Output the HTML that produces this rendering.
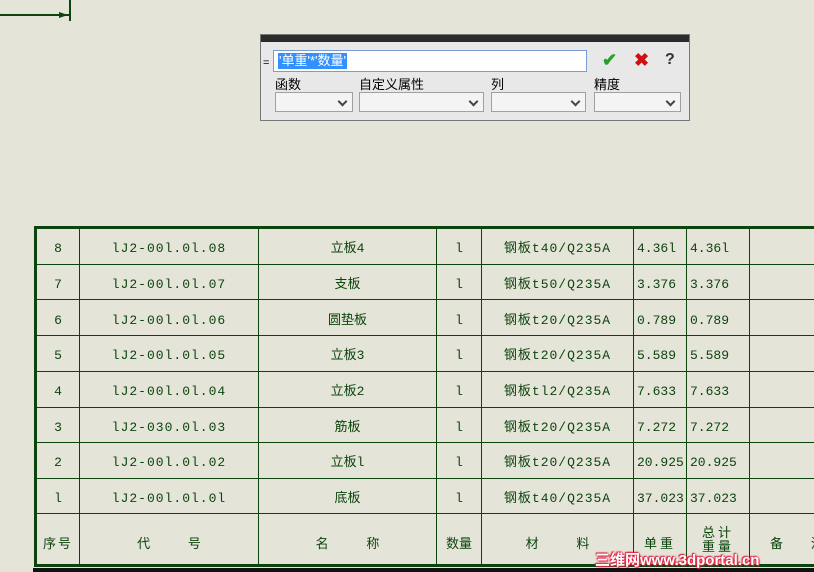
<!DOCTYPE html>
<html><head><meta charset="utf-8"><style>
body{margin:0;width:814px;height:572px;background:#e4e4d9;position:relative;overflow:hidden;font-family:"Liberation Sans","Noto Sans CJK SC",sans-serif}
.a{position:absolute}
.h{position:absolute;background:#0d440d;height:1px}
.v{position:absolute;background:#0d440d;width:1px}
.t{position:absolute;color:#0d440d;font-family:"Liberation Mono","Noto Sans CJK SC",monospace;font-size:13px;text-align:center;line-height:14px}
.sel{position:absolute;height:20px;background:#f4f4f4;border:1px solid #a0a0a0;box-sizing:border-box}
.sel:after{content:"";position:absolute;right:6px;top:5px;width:5px;height:5px;border-right:2px solid #444;border-bottom:2px solid #444;transform:rotate(45deg)}
.lb{position:absolute;font-size:13px;color:#000;top:74px}
</style></head><body>
<div class="a" style="left:0;top:14px;width:70px;height:2px;background:#0d440d"></div>
<div class="a" style="left:69px;top:0;width:2px;height:21px;background:#0d440d"></div>
<div class="a" style="left:59px;top:12px;width:0;height:0;border-left:9px solid #0d440d;border-top:3px solid transparent;border-bottom:3px solid transparent"></div>

<div class="a" style="left:260px;top:34px;width:430px;height:87px;background:#e8e8e8;border:1px solid #777;box-sizing:border-box"></div>
<div class="a" style="left:261px;top:35px;width:428px;height:7px;background:#2b2b2b"></div>
<div class="a" style="left:263px;top:57px;font-size:11px">=</div>
<div class="a" style="left:273px;top:50px;width:314px;height:22px;background:#fff;border:1px solid #7a9cd3;box-sizing:border-box"></div>
<div class="a" style="left:278px;top:53px;height:16px;background:#3390ff;color:#fff;font-size:13px;line-height:16px;padding:0 1px">'单重'*'数量'</div>
<div class="a" style="left:602px;top:50px;color:#2aa02a;font-size:18px;font-weight:bold">✔</div>
<div class="a" style="left:634px;top:50px;color:#d01010;font-size:18px;font-weight:bold">✖</div>
<div class="a" style="left:665px;top:51px;color:#333;font-size:16px;font-weight:bold">?</div>
<div class="lb" style="left:275px">函数</div>
<div class="lb" style="left:359px">自定义属性</div>
<div class="lb" style="left:491px">列</div>
<div class="lb" style="left:594px">精度</div>
<div class="sel" style="left:275px;top:92px;width:78px"></div>
<div class="sel" style="left:359px;top:92px;width:125px"></div>
<div class="sel" style="left:491px;top:92px;width:95px"></div>
<div class="sel" style="left:594px;top:92px;width:87px"></div>

<div class="a" style="left:34px;top:226px;width:780px;height:3px;background:#0d440d"></div>
<div class="a" style="left:34px;top:226px;width:3px;height:341px;background:#0d440d"></div>
<div class="a" style="left:34px;top:564px;width:780px;height:3px;background:#0d440d"></div>
<div class="a" style="left:33px;top:568px;width:781px;height:4px;background:#111"></div>
<div class="h" style="left:34px;top:264px;width:780px"></div>
<div class="h" style="left:34px;top:299px;width:780px"></div>
<div class="h" style="left:34px;top:335px;width:780px"></div>
<div class="h" style="left:34px;top:371px;width:780px"></div>
<div class="h" style="left:34px;top:407px;width:780px"></div>
<div class="h" style="left:34px;top:442px;width:780px"></div>
<div class="h" style="left:34px;top:478px;width:780px"></div>
<div class="h" style="left:34px;top:513px;width:780px"></div>
<div class="v" style="left:79px;top:228px;height:337px"></div>
<div class="v" style="left:258px;top:228px;height:337px"></div>
<div class="v" style="left:436px;top:228px;height:337px"></div>
<div class="v" style="left:481px;top:228px;height:337px"></div>
<div class="v" style="left:633px;top:228px;height:337px"></div>
<div class="v" style="left:686px;top:228px;height:337px"></div>
<div class="v" style="left:749px;top:228px;height:337px"></div>

<div id="rows"></div>
<script>
var d=[["8","lJ2-00l.0l.08","立板4","钢板t40/Q235A","4.36l"],["7","lJ2-00l.0l.07","支板","钢板t50/Q235A","3.376"],["6","lJ2-00l.0l.06","圆垫板","钢板t20/Q235A","0.789"],["5","lJ2-00l.0l.05","立板3","钢板t20/Q235A","5.589"],["4","lJ2-00l.0l.04","立板2","钢板tl2/Q235A","7.633"],["3","lJ2-030.0l.03","筋板","钢板t20/Q235A","7.272"],["2","lJ2-00l.0l.02","立板l","钢板t20/Q235A","20.925"],["l","lJ2-00l.0l.0l","底板","钢板t40/Q235A","37.023"]];
var tops=[242,278,314,349,385,421,456,492],h="";
var cols=[[37,42],[80,178],[259,177],[437,44],[482,151],[634,52],[687,62]];
d.forEach(function(r,i){var v=[r[0],r[1],r[2],"l",r[3],r[4],r[4]];
v.forEach(function(s,j){var c=cols[j];var al=j>=5?"left;padding-left:3px":"center";
h+='<div class="t" style="left:'+c[0]+'px;width:'+c[1]+'px;top:'+tops[i]+'px;text-align:'+al+';letter-spacing:'+(j==1||j==4?'1px':'0')+'">'+s+'</div>';});});
document.getElementById('rows').innerHTML=h;
</script>
<div class="t" style="left:37px;width:42px;top:538px;letter-spacing:2px">序号</div>
<div class="t" style="left:80px;width:178px;top:538px;word-spacing:30px">代 号</div>
<div class="t" style="left:259px;width:177px;top:538px;word-spacing:30px">名 称</div>
<div class="t" style="left:437px;width:44px;top:538px">数量</div>
<div class="t" style="left:482px;width:151px;top:538px;word-spacing:30px">材 料</div>
<div class="t" style="left:634px;width:52px;top:538px;letter-spacing:3px">单重</div>
<div class="t" style="left:687px;width:62px;top:527px;letter-spacing:3px">总计<br>重量</div>
<div class="t" style="left:750px;width:80px;top:538px;text-align:left;padding-left:20px;word-spacing:20px">备 注</div>

<div class="a" style="left:595px;top:549px;color:#fff;font-weight:bold;font-size:15px;text-shadow:0 0 2px #e02040,0 0 2px #e02040,1px 1px 1px #e02040,-1px -1px 1px #e02040;white-space:nowrap">三维网www.3dportal.cn</div>
</body></html>
